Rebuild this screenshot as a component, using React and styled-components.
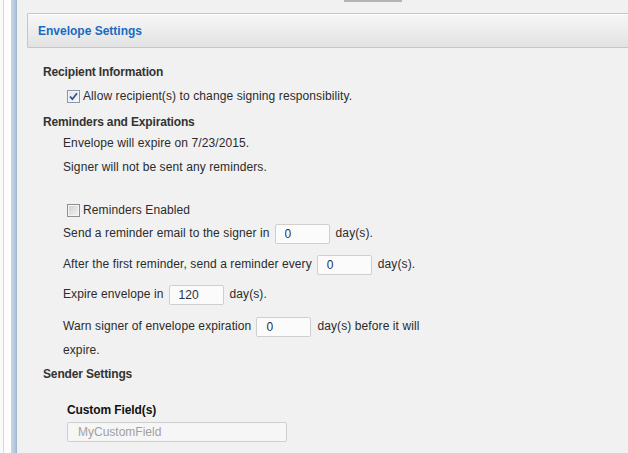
import React from 'react';
import styled, { createGlobalStyle } from 'styled-components';

const GlobalStyle = createGlobalStyle`
  html, body {
    margin: 0;
    padding: 0;
    background: #f1f1f1;
  }
  body {
    font-family: "Liberation Sans", Arial, sans-serif;
    font-size: 12px;
    color: #2b2b2b;
  }
`;

const Page = styled.div`
  display: flex;
  min-height: 453px;
  overflow: hidden;
`;

const Gutter = styled.div`
  width: 11px;
  flex-shrink: 0;
  background: linear-gradient(to right, #fafafa 0 3px, #d9d9d9 3px 4px, #fdfdfd 4px);
`;

const Rail = styled.div`
  width: 6px;
  flex-shrink: 0;
  background: linear-gradient(to right, #c9d6e8, #b3c5dc 70%, #9eb2cd);
`;

const Main = styled.div`
  flex: 1;
  display: flex;
  flex-direction: column;
  background: #f1f1f1;
`;

const TopStrip = styled.div`
  height: 13px;
  display: flex;
  align-items: flex-start;
`;

const ButtonStub = styled.div`
  margin-left: 327px;
  width: 58px;
  height: 2px;
  background: #b4b4b4;
`;

const PanelHeader = styled.div`
  margin-left: 10px;
  height: 33px;
  display: flex;
  align-items: center;
  padding-left: 10px;
  border: 1px solid #c6c6c6;
  border-right: none;
  border-radius: 2px 0 0 2px;
  background: linear-gradient(to bottom, #f6f6f6 0%, #efefef 40%, #e2e2e2 100%);
  box-shadow: inset 0 1px 0 #ffffff;
`;

const PanelTitle = styled.span`
  font-weight: bold;
  font-size: 12px;
  color: #1a6bc0;
`;

const Body = styled.div`
  display: flex;
  flex-direction: column;
  padding-left: 26px;
  padding-top: 14px;
`;

const SectionTitle = styled.div`
  font-weight: bold;
  color: #333;
  height: 20px;
  line-height: 20px;
  letter-spacing: -0.15px;
  margin-top: ${(p) => p.$top || 0}px;
`;

const Indent = styled.div`
  display: flex;
  flex-direction: column;
  padding-left: 20px;
  width: 380px;
  letter-spacing: 0.1px;
`;

const CheckRow = styled.label`
  display: flex;
  align-items: center;
  gap: 3px;
  height: 20px;
  padding-left: 4px;
  margin-top: ${(p) => p.$top || 0}px;
`;

const Box = styled.span`
  width: 11px;
  height: 11px;
  border: 1px solid ${(p) => (p.$checked ? '#8d96a8' : '#8f8f8f')};
  background: ${(p) =>
    p.$checked
      ? 'linear-gradient(to bottom right, #dfe4ee, #f7f8fb)'
      : 'linear-gradient(to bottom right, #cfcfcf, #f4f4f4)'};
  box-shadow: inset 0 0 0 1px #f4f4f4;
  display: flex;
  align-items: center;
  justify-content: center;
`;

const Line = styled.div`
  height: 20px;
  line-height: 20px;
  margin-top: ${(p) => p.$top || 0}px;
`;

const FieldRow = styled.div`
  line-height: 24px;
  margin-top: ${(p) => p.$top || 0}px;
`;

const DaysInput = styled.input`
  box-sizing: border-box;
  width: 55px;
  height: 20px;
  margin: 0 6px 0 5px;
  padding: 0 0 0 9px;
  vertical-align: middle;
  border: 1px solid #cfcfcf;
  border-radius: 2px;
  background: #fbfbfb;
  font-family: "Liberation Sans", Arial, sans-serif;
  font-size: 12px;
  color: #2a2f4a;
  outline: none;
`;

const FieldLabel = styled.div`
  font-weight: bold;
  color: #111;
  height: 20px;
  line-height: 20px;
  padding-left: 24px;
  margin-top: 16px;
  letter-spacing: -0.1px;
`;

const TextField = styled.input`
  box-sizing: border-box;
  margin: 2px 0 0 24px;
  width: 220px;
  height: 20px;
  padding: 0 0 0 10px;
  border: 1px solid #cfcfcf;
  border-radius: 2px;
  background: #f6f6f6;
  font-family: "Liberation Sans", Arial, sans-serif;
  font-size: 12px;
  color: #999;
  outline: none;
  &::placeholder {
    color: #a0a0a0;
  }
`;

function Check({ checked, children, top }) {
  return (
    <CheckRow $top={top}>
      <Box $checked={checked}>
        {checked && (
          <svg width="9" height="9" viewBox="0 0 9 9">
            <path d="M1 4.5 L3.4 7.2 L8 1.2" fill="none" stroke="#34528f" strokeWidth="1.8" />
          </svg>
        )}
      </Box>
      <span>{children}</span>
    </CheckRow>
  );
}

function DaysField({ before, value, after, top }) {
  return (
    <FieldRow $top={top}>
      {before}
      <DaysInput defaultValue={value} />
      {after}
    </FieldRow>
  );
}

export default function App() {
  return (
    <>
      <GlobalStyle />
      <Page>
        <Gutter />
        <Rail />
        <Main>
          <TopStrip>
            <ButtonStub />
          </TopStrip>
          <PanelHeader>
            <PanelTitle>Envelope Settings</PanelTitle>
          </PanelHeader>
          <Body>
            <SectionTitle>Recipient Information</SectionTitle>
            <Indent>
              <Check checked top={4}>
                Allow recipient(s) to change signing responsibility.
              </Check>
            </Indent>
            <SectionTitle $top={6}>Reminders and Expirations</SectionTitle>
            <Indent>
              <Line $top={1}>Envelope will expire on 7/23/2015.</Line>
              <Line $top={4}>Signer will not be sent any reminders.</Line>
              <Check top={23}>Reminders Enabled</Check>
              <DaysField top={1} before="Send a reminder email to the signer in" value="0" after="day(s)." />
              <DaysField top={7} before="After the first reminder, send a reminder every" value="0" after="day(s)." />
              <DaysField top={6} before="Expire envelope in" value="120" after="day(s)." />
              <DaysField
                top={8}
                before="Warn signer of envelope expiration"
                value="0"
                after="day(s) before it will expire."
              />
            </Indent>
            <SectionTitle $top={2}>Sender Settings</SectionTitle>
            <FieldLabel>Custom Field(s)</FieldLabel>
            <TextField placeholder="MyCustomField" />
          </Body>
        </Main>
      </Page>
    </>
  );
}
